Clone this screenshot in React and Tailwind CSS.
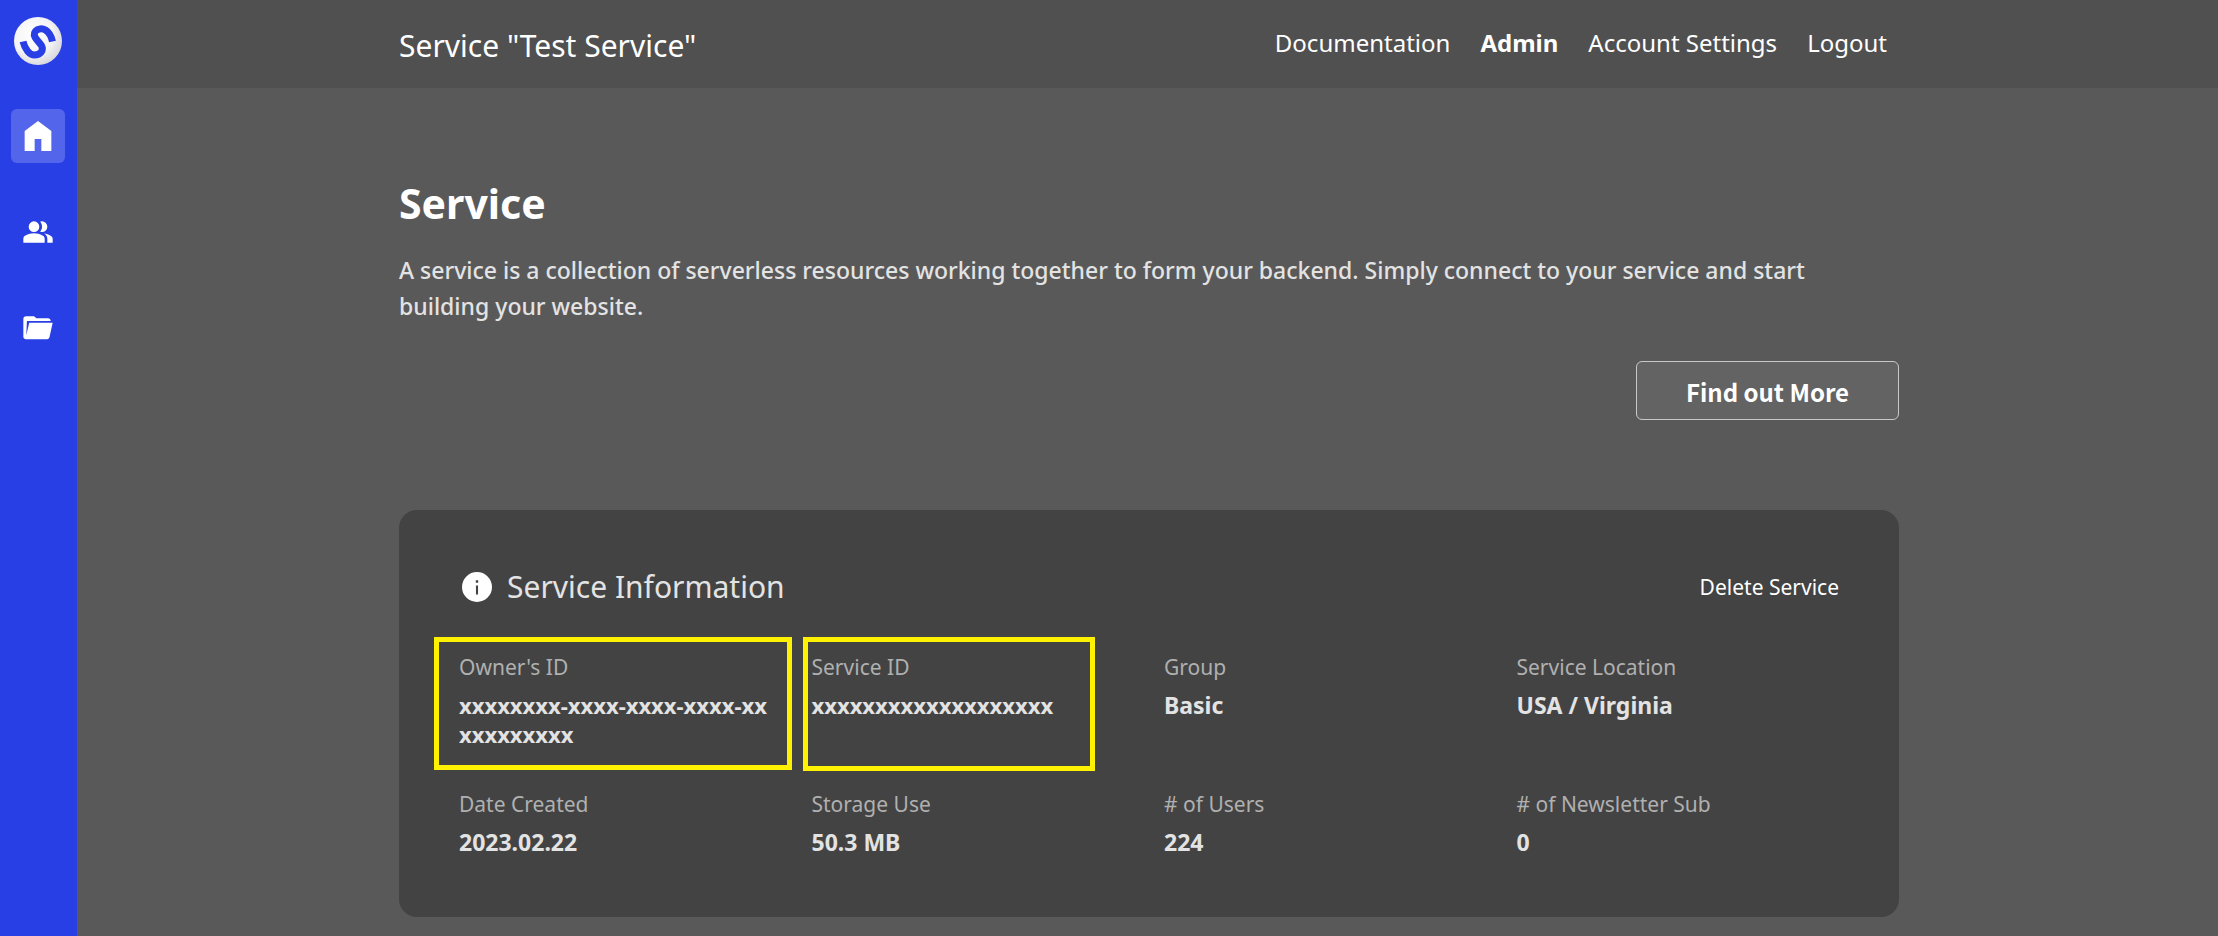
const navLinks = [
  { label: "Documentation" },
  { label: "Admin", active: true },
  { label: "Account Settings" },
  { label: "Logout" },
];

const fields = [
  { label: "Owner's ID", value: "xxxxxxxx-xxxx-xxxx-xxxx-xxxxxxxxxxx", id: true, mark: "-left-[25px] -right-[10px] -top-[14px] h-[133px]" },
  { label: "Service ID", value: "xxxxxxxxxxxxxxxxxxx", id: true, mark: "-left-[9px] right-[39px] -top-[14px] h-[134px]" },
  { label: "Group", value: "Basic" },
  { label: "Service Location", value: "USA / Virginia" },
  { label: "Date Created", value: "2023.02.22" },
  { label: "Storage Use", value: "50.3 MB" },
  { label: "# of Users", value: "224" },
  { label: "# of Newsletter Sub", value: "0" },
];

function Logo() {
  return (
    <svg viewBox="0 0 48 48" className="size-12" aria-hidden="true">
      <defs>
        <radialGradient id="ball" cx="0.4" cy="0.38" r="0.68">
          <stop offset="0" stopColor="#ffffff" />
          <stop offset="0.6" stopColor="#f4f4f6" />
          <stop offset="1" stopColor="#d3d3da" />
        </radialGradient>
      </defs>
      <circle cx="24" cy="24" r="24" fill="url(#ball)" />
      <path
        d="M9 24.5C11 32.5 15.5 38 20.5 38C26.5 38 30 33.500 27.500 28.500C25 24.500 19 20.500 20.500 16C22 11.500 28 11 31.500 13C35.500 15.500 37.500 20 38.500 24.500"
        fill="none"
        stroke="#293fe6"
        strokeWidth="7"
      />
    </svg>
  );
}

function Icon({ d, className }) {
  return (
    <svg viewBox="0 0 24 24" fill="currentColor" className={className} aria-hidden="true">
      <path fillRule="evenodd" d={d} />
    </svg>
  );
}

const HOME = "M4 21V9l8-6 8 6v12h-6v-7.200h-4V21z";
const GROUP =
  "M1 20v-2.800q0-.85.438-1.562T2.600 14.550q1.550-.775 3.150-1.163T9 13t3.250.388 3.150 1.162q.725.375 1.163 1.088T17 17.200V20zm18 0v-3q0-1.100-.613-2.113T16.650 13.150q1.275.15 2.400.513t2.100.887q.9.500 1.375 1.112T23 17v3zM9 12q-1.650 0-2.825-1.175T5 8t1.175-2.825T9 4t2.825 1.175T13 8t-1.175 2.825T9 12m10-4q0 1.650-1.175 2.825T15 12q-.275 0-.7-.062T13.600 11.800q.675-.8 1.038-1.775T15 8t-.363-2.025T13.600 4.200q.35-.125.7-.163T15 4q1.650 0 2.825 1.175T19 8";
const FOLDER =
  "M3 20.500q-.825 0-1.412-.587T1 18.500V5.200q0-.825.588-1.412T3 3.200h6l1.800 1.500h8.700q.825 0 1.413.588T21.500 6.700H3.700L3.200 17.500 5.400 8H23l-2.400 11q-.2.750-.738 1.120T18.900 20.500z";
const INFO =
  "M12 2a10 10 0 1 0 0 20 10 10 0 0 0 0-20M11.300 11h1.400v6h-1.400zM11.200 7.500h1.600v1.600h-1.600z";

export default function App() {
  return (
    <div className="flex min-h-screen bg-[#595959] font-['Noto_Sans',sans-serif] text-white">
      <aside className="flex w-[77px] shrink-0 flex-col items-center bg-[#293fe6] pt-[17px] pr-px">
        <a href="#top" aria-label="Start">
          <Logo />
        </a>
        <nav aria-label="Sections" className="mt-11 flex flex-col gap-[42px]">
          <a href="#home" aria-label="Home" className="grid size-[54px] place-items-center rounded-md bg-white/20">
            <Icon d={HOME} className="size-10" />
          </a>
          <a href="#users" aria-label="Users" className="grid size-[54px] place-items-center">
            <Icon d={GROUP} className="size-8" />
          </a>
          <a href="#files" aria-label="Files" className="grid size-[54px] place-items-center">
            <Icon d={FOLDER} className="size-8" />
          </a>
        </nav>
      </aside>

      <div className="min-w-0 flex-1">
        <header className="bg-[#505050] pl-[3px]">
          <div className="mx-auto flex h-[88px] max-w-[1500px] items-center justify-between pr-3">
            <p className="pt-1 text-[30px] leading-10">Service "Test Service"</p>
            <nav aria-label="Account" className="flex gap-[30px] pb-0.5 text-[24px] leading-8">
              {navLinks.map((l) => (
                <a key={l.label} href="#nav" className={l.active ? "font-bold" : ""}>
                  {l.label}
                </a>
              ))}
            </nav>
          </div>
        </header>

        <main className="pb-4 pl-[3px]">
          <div className="mx-auto max-w-[1500px]">
            <h1 className="pt-[87px] text-[41px] leading-[56px] font-bold">Service</h1>
            <p className="mt-[21px] text-[23px] leading-9 font-medium text-[#e3e3e3]">
              A service is a collection of serverless resources working together to form your backend. Simply connect to
              your service and start building your website.
            </p>
            <div className="mt-[37px] flex justify-end">
              <button
                type="button"
                className="h-[59px] w-[263px] rounded-md border border-[#c8c8c8] bg-[#636363] pt-0.5 font-['Noto_Sans_CJK_KR',sans-serif] text-[24px] font-bold"
              >
                Find out More
              </button>
            </div>

            <section className="mt-[90px] rounded-[18px] bg-[#434343] px-[60px] pt-[57px] pb-[60px]">
              <div className="flex items-center justify-between">
                <h2 className="flex items-center gap-3 text-[30px] leading-10 text-[#e3e3e3]">
                  <Icon d={INFO} className="size-9 text-white" />
                  Service Information
                </h2>
                <button type="button" className="text-[21px] leading-8">
                  Delete Service
                </button>
              </div>
              <dl className="mt-11 grid grid-cols-4 gap-x-[30px] gap-y-[39px]">
                {fields.map((f) => (
                  <div key={f.label} className="relative">
                    <dt className="text-[21px] leading-8 text-[#b0b0b0]">{f.label}</dt>
                    <dd
                      className={
                        "mt-2 pr-2 leading-[29px] font-bold break-all text-[#e3e3e3] " +
                        (f.id ? "text-[22px]" : "text-[23px]")
                      }
                    >
                      {f.value}
                    </dd>
                    {f.mark && <span className={"pointer-events-none absolute border-[5px] border-[#fff200] " + f.mark} />}
                  </div>
                ))}
              </dl>
            </section>
          </div>
        </main>
      </div>
    </div>
  );
}
